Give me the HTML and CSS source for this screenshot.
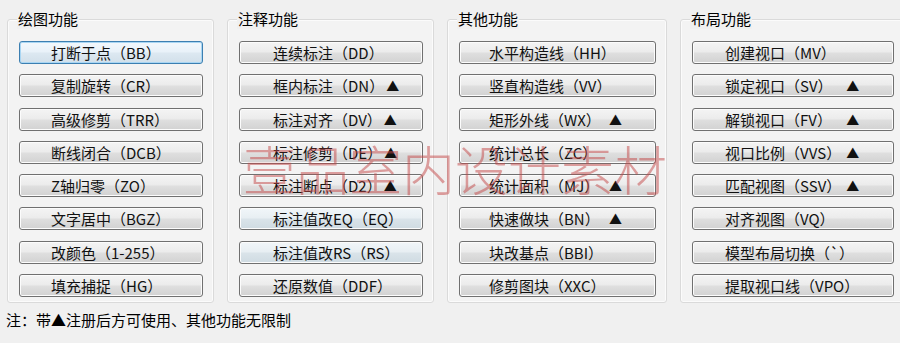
FILE: index.html
```html
<!DOCTYPE html>
<html>
<head>
  <meta charset="utf-8">
  <title>功能面板</title>
  <link rel="stylesheet" href="styles.css">
</head>
<body>

  <div class="panels">
    <fieldset class="group group-draw">
      <legend>绘图功能</legend>
      <button class="cmd focused">打断于点（BB）</button>
      <button class="cmd">复制旋转（CR）</button>
      <button class="cmd">高级修剪（TRR）</button>
      <button class="cmd">断线闭合（DCB）</button>
      <button class="cmd">Z轴归零（ZO）</button>
      <button class="cmd">文字居中（BGZ）</button>
      <button class="cmd">改颜色（1-255）</button>
      <button class="cmd">填充捕捉（HG）</button>
    </fieldset>

    <fieldset class="group group-dim">
      <legend>注释功能</legend>
      <button class="cmd">连续标注（DD）</button>
      <button class="cmd">框内标注（DN）<span class="lock">▲</span></button>
      <button class="cmd">标注对齐（DV）<span class="lock">▲</span></button>
      <button class="cmd">标注修剪（DE）<span class="lock">▲</span></button>
      <button class="cmd">标注断点（D2）<span class="lock">▲</span></button>
      <button class="cmd hover">标注值改EQ（EQ）</button>
      <button class="cmd hover">标注值改RS（RS）</button>
      <button class="cmd">还原数值（DDF）</button>
    </fieldset>

    <fieldset class="group group-other">
      <legend>其他功能</legend>
      <button class="cmd">水平构造线（HH）</button>
      <button class="cmd">竖直构造线（VV）</button>
      <button class="cmd">矩形外线（WX）<span class="lock">▲</span></button>
      <button class="cmd">统计总长（ZC）</button>
      <button class="cmd">统计面积（MJ）<span class="lock">▲</span></button>
      <button class="cmd">快速做块（BN）<span class="lock">▲</span></button>
      <button class="cmd">块改基点（BBI）</button>
      <button class="cmd">修剪图块（XXC）</button>
    </fieldset>

    <fieldset class="group group-layout">
      <legend>布局功能</legend>
      <button class="cmd">创建视口（MV）</button>
      <button class="cmd">锁定视口（SV）<span class="lock">▲</span></button>
      <button class="cmd">解锁视口（FV）<span class="lock">▲</span></button>
      <button class="cmd">视口比例（VVS）<span class="lock">▲</span></button>
      <button class="cmd">匹配视图（SSV）<span class="lock">▲</span></button>
      <button class="cmd">对齐视图（VQ）</button>
      <button class="cmd">模型布局切换（`）</button>
      <button class="cmd">提取视口线（VPO）</button>
    </fieldset>
  </div>

  <p class="note">注：带▲注册后方可使用、其他功能无限制</p>

  <div class="watermark">壹品室内设计素材</div>

</body>
</html>
```

FILE: styles.css
```css
body {
  margin: 0;
  background-color: #f0f0f0;
  font-family: "Noto Sans CJK SC", "Liberation Sans", sans-serif;
  color: #000;
  position: relative;
  height: 343px;
  overflow: hidden;
}

.panels {
  display: grid;
  grid-template-columns: 207px 207px 220px 214px;
  column-gap: 13px;
  padding: 0 0 0 7px;
}

.group {
  margin: 0;
  padding: 12px 10px 5px 11px;
  border: 1px solid #dadada;
  border-radius: 3px;
  background-color: #f3f3f3;
  box-shadow: inset 0 0 0 1px #fbfbfb;
  display: flex;
  flex-direction: column;
  gap: 10.3px;
  margin-top: 9px;
}

.group legend {
  font-size: 15px;
  line-height: 20px;
  padding: 0 1px;
  margin-left: -2px;
  margin-bottom: 0;
  background-color: #f0f0f0;
}

.cmd {
  height: 23px;
  width: 100%;
  margin: 0;
  padding: 0 0 0 31px;
  display: flex;
  align-items: center;
  font-family: "Noto Sans CJK SC", "Liberation Sans", sans-serif;
  font-size: 15px;
  line-height: 1;
  color: #111;
  text-align: left;
  border: 1px solid #707070;
  border-radius: 3px;
  background: linear-gradient(#f4f4f4 0%, #ececec 45%, #dedede 55%, #d2d2d2 100%);
  box-shadow: inset 0 0 0 1px #fcfcfc;
  cursor: pointer;
  white-space: nowrap;
}

.group-dim .cmd { padding-left: 33px; }
.group-other .cmd { padding-left: 29px; padding-right: 33px; }
.group-layout .cmd { padding-left: 32px; padding-right: 34px; }

.cmd.focused {
  border-color: #3c7fb1;
  background: linear-gradient(#f3f8fc 0%, #e9f2f9 45%, #dce8f1 55%, #d2e0ea 100%);
  box-shadow: inset 0 0 0 1px #a9d6f3;
}

.cmd.hover {
  background: linear-gradient(#f1f6f9 0%, #e8eff3 45%, #d9e3e9 55%, #cfdbe2 100%);
}

.lock {
  font-size: 13px;
  margin-left: 2px;
}

.group-other .lock,
.group-layout .lock {
  margin-left: auto;
}

.note {
  margin: 7px 0 0 6px;
  font-size: 15px;
  line-height: 20px;
}

.watermark {
  position: absolute;
  left: 243px;
  top: 138px;
  font-size: 53px;
  line-height: 60px;
  font-weight: 300;
  color: rgba(196, 70, 70, 0.5);
  letter-spacing: 0;
  pointer-events: none;
}
```
